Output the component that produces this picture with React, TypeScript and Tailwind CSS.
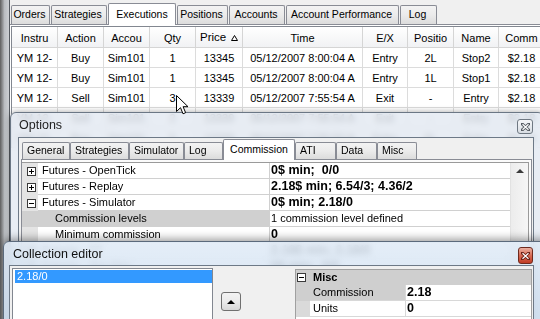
import React from 'react';

const mainTabs = [
  { label: 'Orders', cls: 'w-[39px]' },
  { label: 'Strategies', cls: 'w-[56px]' },
  { label: 'Executions', cls: 'w-[68px]', sel: true },
  { label: 'Positions', cls: 'w-[51px]' },
  { label: 'Accounts', cls: 'w-[56px]' },
  { label: 'Account Performance', cls: 'w-[113px]' },
  { label: 'Log', cls: 'w-[37px]' },
];

const optTabs = [
  { label: 'General', cls: 'w-[48px]' },
  { label: 'Strategies', cls: 'w-[59px]' },
  { label: 'Simulator', cls: 'w-[55px]' },
  { label: 'Log', cls: 'w-[39px]' },
  { label: 'Commission', cls: 'w-[72px]', sel: true },
  { label: 'ATI', cls: 'w-[41px]' },
  { label: 'Data', cls: 'w-[41px]' },
  { label: 'Misc', cls: 'w-[40px]' },
];

const headers = ['Instru', 'Action', 'Accou', 'Qty', 'Price', 'Time', 'E/X', 'Positio', 'Name', 'Comm'];

const rows = [
  ['YM 12-', 'Buy', 'Sim101', '1', '13345', '05/12/2007 8:00:04 A', 'Entry', '2L', 'Stop2', '$2.18'],
  ['YM 12-', 'Buy', 'Sim101', '1', '13345', '05/12/2007 8:00:04 A', 'Entry', '1L', 'Stop1', '$2.18'],
  ['YM 12-', 'Sell', 'Sim101', '3', '13339', '05/12/2007 7:55:54 A', 'Exit', '-', 'Entry', '$2.18'],
  ['YM 12-', 'Sell', 'Sim101', '2', '13339', '05/12/2007 7:55:54 A', 'Exit', '-', 'Entry', '$2.18'],
  ['YM 12-', 'Buy', 'Sim101', '5', '13339', '05/12/2007 7:55:50 A', 'Entry', '5L', 'Entry', '$2.18'],
];

function PlusBox({ minus }: { minus?: boolean }) {
  return (
    <div className="w-[9px] h-[9px] border border-[#3a3a3a] bg-white relative">
      <div className="absolute left-[1px] top-[3px] w-[5px] h-px bg-black" />
      {!minus && <div className="absolute left-[3px] top-[1px] w-px h-[5px] bg-black" />}
    </div>
  );
}

function XGlyph({ dark }: { dark: string }) {
  return (
    <svg width="9" height="8" viewBox="0 0 9 8">
      <path d="M1.2 1 L7.8 7 M7.8 1 L1.2 7" stroke={dark} strokeWidth="3" strokeLinecap="square" />
      <path d="M1.5 1.3 L7.5 6.7 M7.5 1.3 L1.5 6.7" stroke="#ffffff" strokeWidth="1.2" />
    </svg>
  );
}

type PRow = { label: string; value: string; box?: 'plus' | 'minus'; child?: boolean; bold?: boolean; sel?: boolean };

const optRows: PRow[] = [
  { label: 'Futures - OpenTick', value: '0$ min;  0/0', box: 'plus', bold: true },
  { label: 'Futures - Replay', value: '2.18$ min; 6.54/3; 4.36/2', box: 'plus', bold: true },
  { label: 'Futures - Simulator', value: '0$ min; 2.18/0', box: 'minus', bold: true },
  { label: 'Commission levels', value: '1 commission level defined', child: true, sel: true },
  { label: 'Minimum commission', value: '0', child: true, bold: true },
  { label: 'Futures - TT', value: '2.18$ min; 2.18/0', box: 'plus', bold: true },
  { label: 'Futures - Zen-Fire', value: '0$ min;  0/0', box: 'plus', bold: true },
];

export default function App() {
  return (
    <div className="w-[540px] h-[319px] relative overflow-hidden bg-[#f0f0f0] font-['Liberation_Sans',Arial,sans-serif] text-black">
      {/* Main window */}
      <div className="flex h-full">
        <div className="w-[10px] h-full bg-linear-to-r from-[#5f5f5f] via-[#b9bcc0] to-[#cdd0d4] border-r border-[#555a60]" />
        <div className="flex-1 flex flex-col min-w-0">
          <div className="h-[25px] flex items-end gap-[1px] pl-[1px] border-b border-[#898c95] bg-[#f0f0f0]">
            {mainTabs.map((t) =>
              t.sel ? (
                <div
                  key={t.label}
                  className={`${t.cls} h-[22px] -mb-px relative z-10 border border-b-0 border-[#898c95] bg-white rounded-t-[2px] flex items-center justify-center text-[10.5px] whitespace-nowrap`}
                >
                  {t.label}
                </div>
              ) : (
                <div
                  key={t.label}
                  className={`${t.cls} h-[19px] border border-b-0 border-[#898c95] bg-linear-to-b from-[#f3f3f3] via-[#ebebeb] to-[#dcdcdc] rounded-t-[2px] flex items-center justify-center pr-[2px] text-[10.5px] whitespace-nowrap`}
                >
                  {t.label}
                </div>
              )
            )}
          </div>
          <div className="flex-1 bg-white pt-[1px] pl-[1px]">
            <div className="border-l border-t border-[#828790] grid grid-cols-[46px_46px_46px_46px_47px_120px_45px_46px_45px_46px] text-[11px]">
              {headers.map((h) =>
                h === 'Price' ? (
                  <div
                    key={h}
                    className="h-[21px] relative border-r border-b border-[#d5d5d5] bg-linear-to-b from-white to-[#f1f2f4] flex items-center pl-[4px] pt-[2px] text-[11.5px]"
                  >
                    Price
                    <svg className="absolute right-[4px] top-[8px]" width="7" height="6" viewBox="0 0 7 6">
                      <path d="M3.5 0.5 L6.5 5.5 L0.5 5.5 Z" fill="white" stroke="black" strokeWidth="1" />
                    </svg>
                  </div>
                ) : (
                  <div
                    key={h}
                    className="h-[21px] border-r border-b border-[#d5d5d5] bg-linear-to-b from-white to-[#f1f2f4] flex items-center justify-center pt-[2px] overflow-hidden whitespace-nowrap"
                  >
                    {h}
                  </div>
                )
              )}
              {rows.map((r, i) =>
                r.map((c, j) => (
                  <div
                    key={`${i}-${j}`}
                    className="h-[20px] border-r border-b border-[#dcdcdc] flex items-center justify-center overflow-hidden whitespace-nowrap pt-[1px]"
                  >
                    {c}
                  </div>
                ))
              )}
            </div>
          </div>
        </div>
      </div>

      {/* Options window */}
      <div className="absolute left-[10px] top-[112px] w-[534px] h-[220px] border border-[#6b7785] rounded-t-[6px] bg-[#e2e9f1]/80 backdrop-blur-[3px] shadow-[0_0_6px_rgba(0,0,0,0.35)]">
        <div className="h-[24px] flex items-center pl-[8px] pt-[1px] text-[12.5px] text-[#222]">Options</div>
        <div className="absolute left-[506px] top-[6px] w-[16px] h-[15px] rounded-[3px] border border-[#6f7882] bg-linear-to-b from-[#f6f7f9] to-[#d8dde3] flex items-center justify-center">
          <XGlyph dark="#555b62" />
        </div>
        <div className="ml-[7px] w-[516px] h-[190px] border border-[#6d7987] bg-[#f0f0f0] flex flex-col">
          <div className="h-[21px] flex items-end pl-[3px]">
            {optTabs.map((t) =>
              t.sel ? (
                <div
                  key={t.label}
                  className={`${t.cls} h-[21px] -mb-px relative z-10 border border-b-0 border-[#898c95] bg-white rounded-t-[2px] flex items-center justify-center text-[10.5px] whitespace-nowrap`}
                >
                  {t.label}
                </div>
              ) : (
                <div
                  key={t.label}
                  className={`${t.cls} h-[17px] border border-b-0 border-[#898c95] bg-linear-to-b from-[#f3f3f3] via-[#ebebeb] to-[#dcdcdc] rounded-t-[2px] flex items-center pl-[4px] text-[10.5px] whitespace-nowrap`}
                >
                  {t.label}
                </div>
              )
            )}
          </div>
          <div className="ml-[2px] w-[511px] flex-1 border border-[#898c95] bg-[#fbfbfb] pt-[2px]">
            <div className="w-[507px] h-full border-t border-r border-[#9a9a9a] flex">
              <div className="w-[488px] flex flex-col">
                {optRows.map((r) => (
                  <div key={r.label} className="flex h-[16px] text-[11px]">
                    <div className={`w-[16px] h-full flex items-center pl-[5px] ${r.sel ? 'bg-[#d0d0d0]' : 'bg-[#e4e4e4]'}`}>
                      {r.box && <PlusBox minus={r.box === 'minus'} />}
                    </div>
                    <div
                      className={`w-[232px] h-full border-r border-b border-[#d0d0d0] flex items-center whitespace-nowrap ${
                        r.child ? 'pl-[17px]' : 'pl-[4px]'
                      } ${r.sel ? 'bg-[#d0d0d0]' : 'bg-white'}`}
                    >
                      {r.label}
                    </div>
                    <div
                      className={`flex-1 h-full border-b border-[#d0d0d0] bg-white flex items-center pl-[1px] whitespace-pre ${
                        r.bold ? 'font-bold text-[12.5px]' : 'text-[11px]'
                      }`}
                    >
                      {r.value}
                    </div>
                  </div>
                ))}
              </div>
              <div className="w-[18px] bg-linear-to-r from-[#ececec] to-[#f6f6f6] border-l border-[#e2e2e2] pt-[6px] flex justify-center">
                <div className="w-0 h-0 border-l-[4px] border-r-[4px] border-b-[4px] border-l-transparent border-r-transparent border-b-[#3a3a3a]" />
              </div>
            </div>
          </div>
        </div>
      </div>

      {/* Collection editor */}
      <div className="absolute left-[3px] top-[241px] w-[545px] h-[100px] border border-[#5b6a7c] rounded-t-[6px] bg-linear-to-b from-[#e0ebf7]/85 to-[#c6d8eb]/85 backdrop-blur-[3px] shadow-[0_-2px_8px_rgba(0,0,0,0.4)]">
        <div className="h-[23px] flex items-center pl-[9px] pt-[2px] text-[12.5px] text-[#111]">Collection editor</div>
        <div className="absolute left-[514px] top-[5px] w-[15px] h-[17px] rounded-[3px] border border-[#6e2a1e] bg-linear-to-b from-[#eab0a2] via-[#d76a54] to-[#c13a22] flex items-center justify-center">
          <XGlyph dark="#6a1f14" />
        </div>
        <div className="ml-[5px] w-[525px] h-[80px] border border-[#6d7987] bg-[#f0f0f0] flex items-start pl-[2px] pt-[2px]">
          <div className="w-[201px] h-[70px] border border-[#828790] bg-white">
            <div className="mt-[1px] ml-[2px] w-[197px] h-[13px] bg-[#3399ff] text-white text-[11px] leading-[13px] pl-[2px]">2.18/0</div>
          </div>
          <div className="ml-[8px] mt-[24px] w-[20px] h-[19px] rounded-[3px] border border-[#707070] bg-linear-to-b from-[#f3f3f3] via-[#ebebeb] to-[#d8d8d8] flex items-center justify-center">
            <div className="w-0 h-0 border-l-[4px] border-r-[4px] border-b-[4px] border-l-transparent border-r-transparent border-b-black" />
          </div>
          <div className="ml-[54px] mt-[1px] w-[237px] h-[60px] border border-[#a0a0a0] bg-white text-[11px]">
            <div className="h-[15px] bg-[#cfcfcf] flex items-center">
              <div className="w-[14px] flex items-center pl-[1px]">
                <PlusBox minus />
              </div>
              <div className="pl-[3px] font-bold">Misc</div>
            </div>
            <div className="flex h-[16px]">
              <div className="w-[14px] bg-[#cfcfcf]" />
              <div className="w-[96px] bg-[#cfcfcf] border-r border-b border-[#d8d8d8] flex items-center pl-[3px]">Commission</div>
              <div className="flex-1 border-b border-[#d8d8d8] flex items-center pl-[1px] font-bold text-[12.5px]">2.18</div>
            </div>
            <div className="flex h-[16px]">
              <div className="w-[14px] bg-[#dadada]" />
              <div className="w-[96px] border-r border-b border-[#d8d8d8] flex items-center pl-[3px]">Units</div>
              <div className="flex-1 border-b border-[#d8d8d8] flex items-center pl-[1px] font-bold text-[12.5px]">0</div>
            </div>
          </div>
        </div>
      </div>

      {/* Mouse cursor */}
      <svg className="absolute left-[176px] top-[95px] z-50" width="13" height="20" viewBox="0 0 13 20">
        <path d="M0.5 0.5 L0.5 16.5 L4.5 12.7 L7 18.8 L9.6 17.7 L7.1 11.7 L12 11.7 Z" fill="white" stroke="black" strokeWidth="1" strokeLinejoin="miter" />
      </svg>
    </div>
  );
}
